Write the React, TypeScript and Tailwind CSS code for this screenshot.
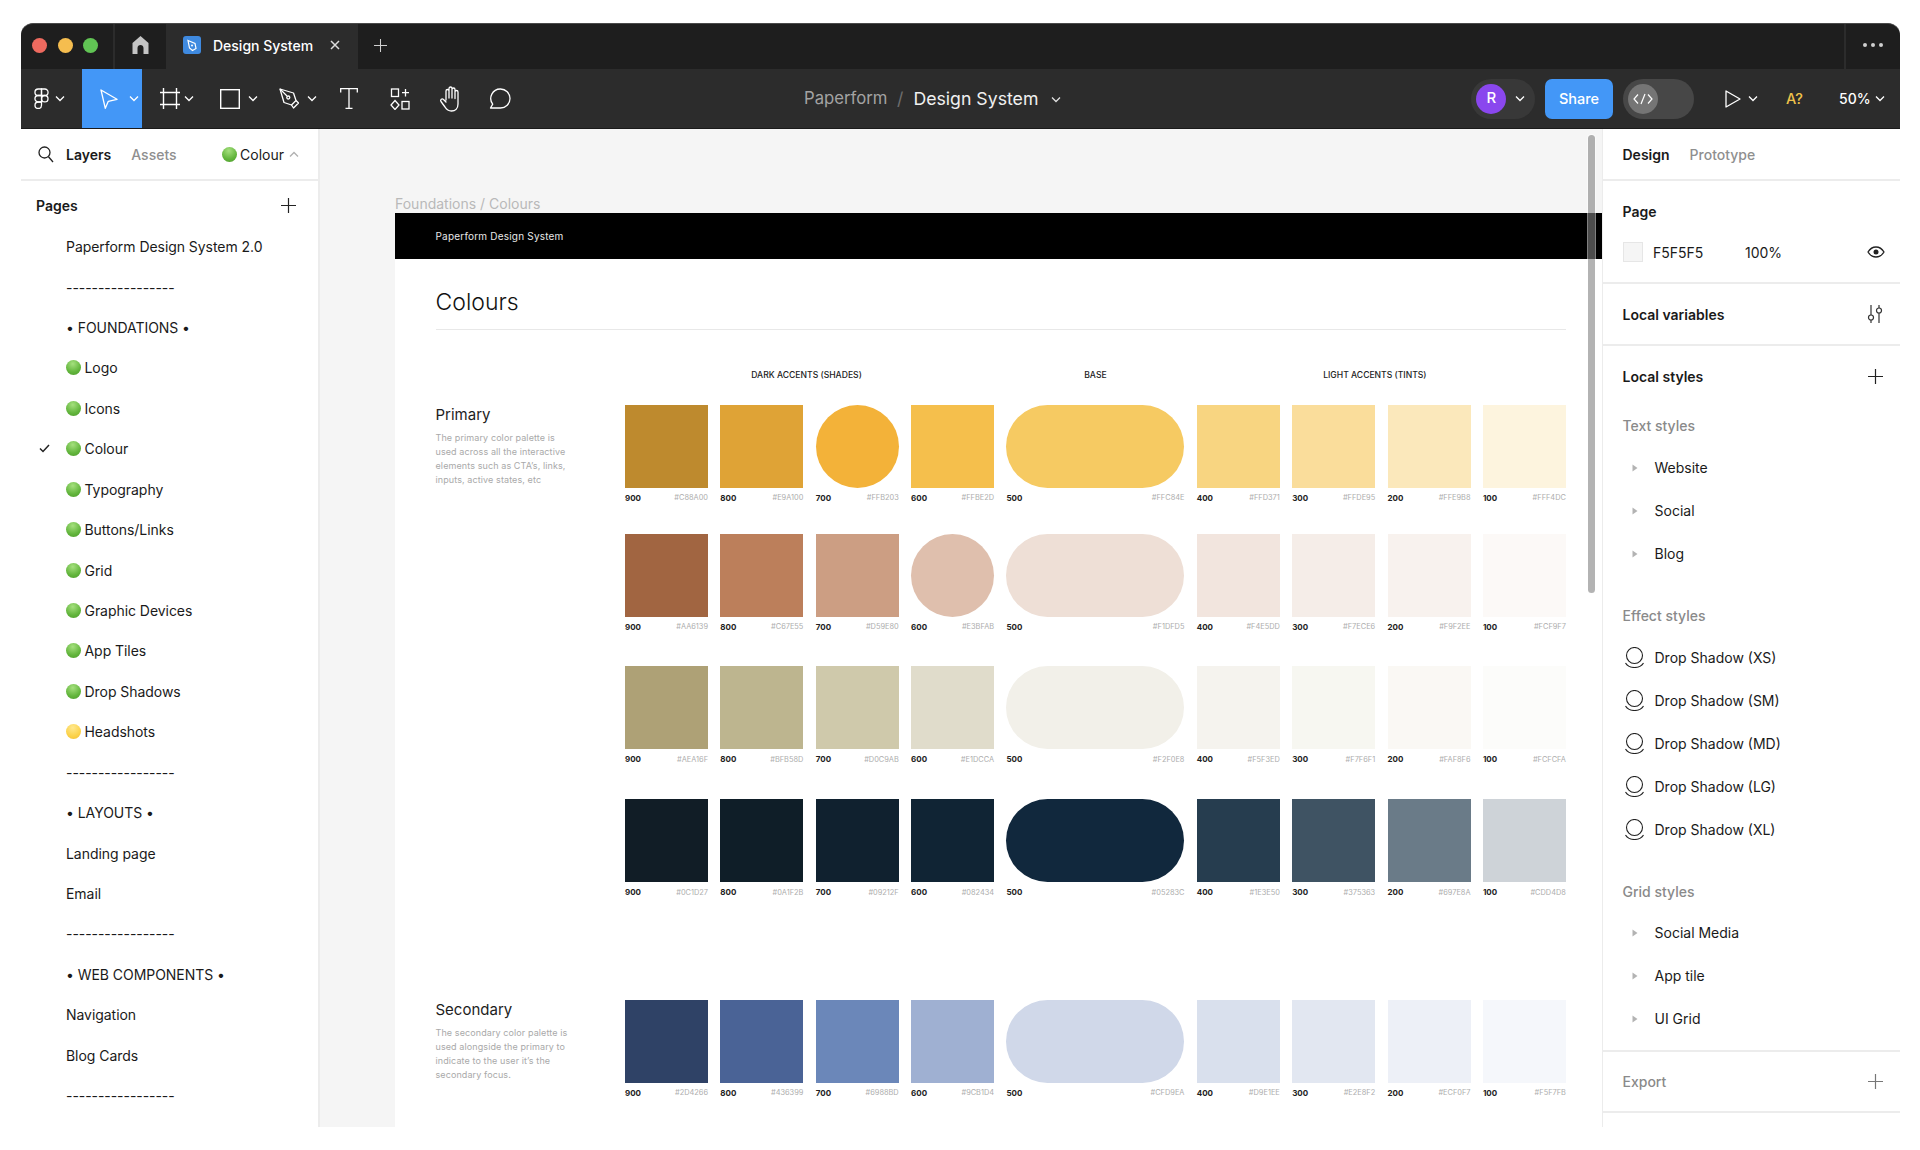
import React from "react";

const Chev = ({ up = false, className = "" }: { up?: boolean; className?: string }) => (
  <svg width="10" height="7" viewBox="0 0 10 7" fill="none" className={className}>
    <path d={up ? "M1 5.5 5 1.5 9 5.5" : "M1 1.5 5 5.5 9 1.5"} stroke="currentColor" strokeWidth="1.3" />
  </svg>
);

const Plus = ({ size = 15, className = "" }: { size?: number; className?: string }) => (
  <svg width={size} height={size} viewBox="0 0 15 15" fill="none" className={className}>
    <path d="M7.5 0v15M0 7.5h15" stroke="currentColor" strokeWidth="1.2" />
  </svg>
);

const Dot = ({ yellow = false, className = "" }: { yellow?: boolean; className?: string }) => (
  <span
    className={
      (yellow
        ? "w-[15px] h-[15px] rounded-full shrink-0 bg-[radial-gradient(circle_at_45%_25%,#ffe88e,#fbd24a_60%,#f2bd33)] "
        : "w-[15px] h-[15px] rounded-full shrink-0 bg-[radial-gradient(circle_at_45%_25%,#a5e07e,#62b53c_60%,#4c9a2c)] ") + className
    }
  />
);

type Page = { t: string; dot?: "g" | "y"; check?: boolean };
const pages: Page[] = [
  { t: "Paperform Design System 2.0" },
  { t: "-----------------" },
  { t: "• FOUNDATIONS •" },
  { t: "Logo", dot: "g" },
  { t: "Icons", dot: "g" },
  { t: "Colour", dot: "g", check: true },
  { t: "Typography", dot: "g" },
  { t: "Buttons/Links", dot: "g" },
  { t: "Grid", dot: "g" },
  { t: "Graphic Devices", dot: "g" },
  { t: "App Tiles", dot: "g" },
  { t: "Drop Shadows", dot: "g" },
  { t: "Headshots", dot: "y" },
  { t: "-----------------" },
  { t: "• LAYOUTS •" },
  { t: "Landing page" },
  { t: "Email" },
  { t: "-----------------" },
  { t: "• WEB COMPONENTS •" },
  { t: "Navigation" },
  { t: "Blog Cards" },
  { t: "-----------------" },
];

type Sw = { n: string; hex: string; c: string };
const mk = (cols: string[], hexes: string[]): Sw[] =>
  ["900", "800", "700", "600", "500", "400", "300", "200", "100"].map((n, i) => ({ n, hex: hexes[i], c: cols[i] }));

const rows = [
  {
    mt: "mt-[23px]",
    circle: 2,
    sw: mk(
      ["#BE8A2E", "#DFA336", "#F3B239", "#F5BF4C", "#F6CA62", "#F8D581", "#FADD9B", "#FBE8BB", "#FDF4DE"],
      ["#C88A00", "#E9A100", "#FFB203", "#FFBE2D", "#FFC84E", "#FFD371", "#FFDE95", "#FFE9B8", "#FFF4DC"]
    ),
    title: "Primary",
    desc: ["The primary color palette is", "used across all the interactive", "elements such as CTA’s, links,", "inputs, active states, etc"],
  },
  {
    mt: "mt-[30px]",
    circle: 3,
    sw: mk(
      ["#A16541", "#BC7F5B", "#CC9E83", "#DFBFAD", "#EEDFD6", "#F2E5DE", "#F5EDE8", "#F8F2EE", "#FCF9F7"],
      ["#AA6139", "#C67E55", "#D59E80", "#E3BFAB", "#F1DFD5", "#F4E5DD", "#F7ECE6", "#F9F2EE", "#FCF9F7"]
    ),
  },
  {
    mt: "mt-[33.7px]",
    circle: -1,
    sw: mk(
      ["#AEA176", "#BDB58F", "#CFC9AB", "#E0DCCB", "#F2F0E9", "#F5F3EE", "#F7F7F1", "#FAF8F4", "#FCFCFA"],
      ["#AEA16F", "#BFB58D", "#D0C9AB", "#E1DCCA", "#F2F0E8", "#F5F3ED", "#F7F6F1", "#FAF8F6", "#FCFCFA"]
    ),
  },
  {
    mt: "mt-[33.6px]",
    circle: -1,
    sw: mk(
      ["#111D26", "#0F1E28", "#10212F", "#102434", "#11283D", "#263D4F", "#3F5363", "#6A7B88", "#CED3D8"],
      ["#0C1D27", "#0A1F2B", "#09212F", "#082434", "#05283C", "#1E3E50", "#375363", "#697E8A", "#CDD4D8"]
    ),
  },
  {
    mt: "mt-[101.7px]",
    circle: -1,
    sw: mk(
      ["#2F4266", "#4A6396", "#6B87B9", "#9FB0D2", "#D0D8E9", "#D9E0ED", "#E2E7F1", "#EDF0F7", "#F5F7FB"],
      ["#2D4266", "#436399", "#6988BD", "#9CB1D4", "#CFD9EA", "#D9E1EE", "#E2E8F2", "#ECF0F7", "#F5F7FB"]
    ),
    title: "Secondary",
    desc: ["The secondary color palette is", "used alongside the primary to", "indicate to the user it’s the", "secondary focus."],
  },
];

const gridCols = "grid grid-cols-[83px_83px_83px_83px_178px_83px_83px_83px_83px] gap-x-[12.36px]";

const Tri = () => (
  <svg width="6" height="8" viewBox="0 0 6 8" className="shrink-0 ml-[29px] mr-[17px]">
    <path d="M0.5 0.5 5.5 4 0.5 7.5z" fill="#b3b3b3" />
  </svg>
);

const StyleRow = ({ t }: { t: string }) => (
  <div className="h-[43px] flex items-center text-[14px] text-[#1a1a1a]">
    <Tri />
    <span>{t}</span>
  </div>
);

const ShadowRow = ({ t }: { t: string }) => (
  <div className="h-[43px] flex items-center text-[14px] text-[#1a1a1a] pl-[22px]">
    <svg width="19" height="21" viewBox="0 0 19 21" fill="none" className="mr-[11px] shrink-0">
      <circle cx="9.5" cy="8.5" r="8" stroke="#222" strokeWidth="1.1" />
      <path d="M0.500 16c1.800 3 5 4.500 9 4.500s7.200-1.500 9-4.500" stroke="#222" strokeWidth="1.1" />
    </svg>
    {t}
  </div>
);

export default function App() {
  return (
    <div className="w-[1920px] h-[1150px] bg-white overflow-hidden font-['Inter',sans-serif] pt-[23px] pl-[21px]">
      <div className="w-[1879px] h-[1104px] flex flex-col">
        {/* Tab bar */}
        <div className="h-[46px] bg-[#1e1e1e] rounded-t-[12px] flex items-stretch text-white shrink-0 border-t border-[#4a4a4a]">
          <div className="w-[94px] flex items-center gap-[10.500px] pl-[11px] pb-[3px] border-r-2 border-[#2c2c2c]">
            <span className="w-[15px] h-[15px] rounded-full bg-[#ee6a5f]" />
            <span className="w-[15px] h-[15px] rounded-full bg-[#f5bd4f]" />
            <span className="w-[15px] h-[15px] rounded-full bg-[#61c454]" />
          </div>
          <div className="w-[51px] flex items-center justify-center pb-[3px]">
            <svg width="17" height="18" viewBox="0 0 17 18">
              <path d="M8.5 0 16.500 7V18H11.500V12C11.500 10.300 10.200 9 8.500 9S5.500 10.300 5.500 12V18H0.500V7z" fill="#c4c4c4" />
            </svg>
          </div>
          <div className="w-[192px] bg-[#2c2c2c] flex items-center pl-[17px] pb-[3px]">
            <span className="w-[18px] h-[18px] rounded-[3px] bg-[#3f8ae0] flex items-center justify-center shrink-0">
              <svg width="12" height="13" viewBox="0 0 12 13" fill="none">
                <path d="M2 1.500 9 4.500 10 9.500 6.500 11.500 3.500 9z" stroke="#fff" strokeWidth="1.200" />
                <circle cx="6" cy="6.500" r="1" fill="#fff" />
              </svg>
            </span>
            <span className="ml-[12px] text-[14px] font-medium whitespace-nowrap">Design System</span>
            <svg width="10" height="10" viewBox="0 0 10 10" className="ml-[17px] shrink-0">
              <path d="M1 1 9 9M9 1 1 9" stroke="#ddd" strokeWidth="1.500" />
            </svg>
          </div>
          <div className="w-[44px] flex items-center justify-center text-[#d0d0d0] pb-[3px]">
            <Plus size={13} />
          </div>
          <div className="flex-1" />
          <div className="w-[56px] border-l-2 border-[#2c2c2c] flex items-center justify-center gap-[4px] pb-[3px]">
            <span className="w-[4px] h-[4px] rounded-full bg-[#cfcfcf]" />
            <span className="w-[4px] h-[4px] rounded-full bg-[#cfcfcf]" />
            <span className="w-[4px] h-[4px] rounded-full bg-[#cfcfcf]" />
          </div>
        </div>

        {/* Toolbar */}
        <div className="h-[60px] bg-[#2c2c2c] flex items-center text-white shrink-0 relative border-b border-[#1a1a1a]">
          <div className="w-[61px] flex items-center pl-[13px] gap-[3px]">
            <svg width="15" height="21" viewBox="0 0 15 21" fill="none" stroke="#fff" strokeWidth="1.300">
              <path d="M7.500 1H4.200a3.200 3.200 0 0 0 0 6.500h3.300z" />
              <path d="M7.500 1h3.300a3.200 3.200 0 0 1 0 6.500H7.500z" />
              <path d="M7.500 7.500H4.200a3.200 3.200 0 0 0 0 6.500h3.300z" />
              <circle cx="10.800" cy="10.700" r="3.200" />
              <path d="M4.200 14h3.300v3.300a3.250 3.250 0 1 1-3.300-3.300z" />
            </svg>
            <Chev className="text-white ml-[3px]" />
          </div>
          <div className="w-[60px] h-full bg-[#4397f7] flex items-center pl-[18px] gap-[11px]">
            <svg width="18" height="20" viewBox="0 0 18 20" fill="none">
              <path d="M1 1 17 10.300 8.300 12.300 5.300 19.300z" stroke="#fff" strokeWidth="1.300" strokeLinejoin="round" />
            </svg>
            <Chev />
          </div>
          <div className="w-[60px] flex items-center pl-[18px] gap-[4px]">
            <svg width="20" height="21" viewBox="0 0 20 21" fill="none" stroke="#fff" strokeWidth="1.400">
              <path d="M3.500 0v21M16.500 0v21M0 4.500h20M0 16.500h20" />
            </svg>
            <Chev />
          </div>
          <div className="w-[60px] flex items-center pl-[18px] gap-[8px]">
            <svg width="20" height="20" viewBox="0 0 20 20" fill="none" stroke="#fff" strokeWidth="1.400">
              <rect x="0.700" y="0.700" width="18.600" height="18.600" />
            </svg>
            <Chev />
          </div>
          <div className="w-[61px] flex items-center pl-[17px] gap-[8px]">
            <svg width="20" height="21" viewBox="0 0 20 21" fill="none" stroke="#fff" strokeWidth="1.300" strokeLinejoin="round">
              <path d="M1 1 14.500 5 17 12.500 12.500 17 5 14.500z" />
              <path d="M1 1 8 8" />
              <circle cx="9.300" cy="9.500" r="1.500" />
              <path d="M12.500 17 14.500 20 19.500 15 17 12.500" />
            </svg>
            <Chev />
          </div>
          <div className="w-[51px] flex justify-center">
            <svg width="18" height="21" viewBox="0 0 18 21" fill="none" stroke="#fff" strokeWidth="1.300">
              <path d="M0.700 4.500V0.700H17.300V4.500M9 0.700V20.300M5.500 20.300H12.500" />
            </svg>
          </div>
          <div className="w-[52px] flex justify-center">
            <svg width="20" height="22" viewBox="0 0 20 22" fill="none" stroke="#fff" strokeWidth="1.300">
              <rect x="1.500" y="1" width="7" height="7.500" />
              <path d="M15.500 1v7.500M12 4.700h7" />
              <path d="M5 12.500 9 17 5 21.500 1 17z" />
              <rect x="12" y="13.500" width="7" height="7.500" />
            </svg>
          </div>
          <div className="w-[48px] flex justify-center">
            <svg width="23" height="26" viewBox="0 0 23 26" fill="none" stroke="#fff" strokeWidth="1.300" strokeLinejoin="round" strokeLinecap="round">
              <path d="M7 14V5a1.500 1.500 0 0 1 3 0v7M10 12V2.500a1.500 1.500 0 0 1 3 0V12M13 12V3.500a1.500 1.500 0 0 1 3 0V12M16 12.500V6a1.500 1.500 0 0 1 3 0v12c0 4.500-2.800 7-6.500 7-3.500 0-5-1.500-6.500-4L2 15.500c-1.200-1.700 1-3.500 2.500-2L7 16" />
            </svg>
          </div>
          <div className="w-[52px] flex justify-center">
            <svg width="22" height="22" viewBox="0 0 22 22" fill="none" stroke="#fff" strokeWidth="1.300" strokeLinejoin="round">
              <path d="M11.500 1a9.500 9.500 0 0 1 0 19H1.500l2.200-3.800A9.500 9.500 0 0 1 11.500 1z" />
            </svg>
          </div>

          {/* Title: overlays the toolbar centre */}
          <div className="absolute left-[783px] top-0 h-full pt-[1px] flex items-center text-[17.700px] whitespace-nowrap">
            <span className="text-[#a3a3a3] w-[82px] text-[16.700px]">Paperform</span>
            <span className="text-[#6e6e6e] ml-[11px]">/</span>
            <span className="text-[#f0f0f0] ml-[10px]">Design System</span>
            <Chev className="ml-[13px] text-[#e0e0e0]" />
          </div>

          <div className="ml-auto flex items-center h-full pr-[15px]">
            <div className="w-[63.700px] h-[40px] rounded-full bg-[#383838] flex items-center pl-[5px]">
              <span className="w-[30px] h-[30px] rounded-full bg-[#8a47ee] flex items-center justify-center text-[15px] font-medium">R</span>
              <Chev className="ml-[9px]" />
            </div>
            <div className="w-[68px] h-[40px] ml-[10px] rounded-[7px] bg-[#4397f7] flex items-center justify-center text-[14.500px] font-medium">Share</div>
            <div className="w-[70.700px] h-[40px] ml-[10.300px] rounded-full bg-[#474747] flex items-center pl-[5px]">
              <span className="w-[30px] h-[30px] rounded-full bg-[#757575] flex items-center justify-center">
                <svg width="20" height="12" viewBox="0 0 20 12" fill="none" stroke="#fff" strokeWidth="1.200">
                  <path d="M5 1.500 1 6 5 10.500M15 1.500 19 6 15 10.500M12 1 8 11" />
                </svg>
              </span>
            </div>
            <svg width="16" height="18" viewBox="0 0 16 18" fill="none" stroke="#fff" strokeWidth="1.300" className="ml-[31px]">
              <path d="M1 1 15 9 1 17z" strokeLinejoin="round" />
            </svg>
            <Chev className="ml-[7px]" />
            <span className="ml-[28px] w-[17px] text-[14.500px] font-medium text-[#eec24a] whitespace-nowrap">A?</span>
            <span className="ml-[36px] w-[30px] text-[14px] font-medium whitespace-nowrap">50%</span>
            <Chev className="ml-[6px]" />
          </div>
        </div>

        {/* Body */}
        <div className="flex-1 flex min-h-0">
          {/* Left panel */}
          <div className="w-[299px] shrink-0 border-r-2 border-[#ececec] bg-white overflow-hidden text-[14px] text-[#1a1a1a]">
            <div className="h-[52px] border-b-2 border-[#ececec] flex items-center pl-[17px] pr-[19px] text-[14px]">
              <svg width="16" height="17" viewBox="0 0 16 17" fill="none" stroke="#222" strokeWidth="1.300" className="mr-[12px]">
                <circle cx="6.500" cy="6.500" r="5.500" />
                <path d="M10.500 10.800 15 16" />
              </svg>
              <span className="font-semibold">Layers</span>
              <span className="ml-[20px] text-[#8f8f8f] font-medium">Assets</span>
              <Dot className="ml-auto" />
              <span className="ml-[3px] font-normal">Colour</span>
              <Chev up className="ml-[5px] text-[#b0b0b0]" />
            </div>
            <div className="h-[45.500px] pt-[4px] pl-[15px] pr-[22px] flex items-center justify-between">
              <span className="font-semibold">Pages</span>
              <Plus className="text-[#222]" />
            </div>
            {pages.map((p, i) => (
              <div key={i} className="h-[40.430px] flex items-center pl-[45px] relative whitespace-nowrap tracking-[-0.05px]">
                {p.check && (
                  <svg width="11" height="9" viewBox="0 0 11 9" fill="none" className="absolute left-[18px]">
                    <path d="M1 4.500 4 7.500 10 1" stroke="#222" strokeWidth="1.500" />
                  </svg>
                )}
                {p.dot && <Dot yellow={p.dot === "y"} className="mr-[3.500px]" />}
                {p.t}
              </div>
            ))}
          </div>

          {/* Canvas */}
          <div className="flex-1 min-w-0 bg-[#f5f5f5] relative overflow-hidden pt-[65.500px]">
            <div className="ml-[75px] h-[18.500px] leading-[18px] text-[14px] text-[#b9b9b9]">Foundations / Colours</div>
            <div className="ml-[75px] h-[45.500px] bg-black flex items-center pl-[40.500px] pt-[2px] text-[10px] tracking-[0.2px] text-[#e8e8e8]">
              Paperform Design System
            </div>
            <div className="ml-[75px] bg-white h-[900px] pl-[40.500px] pr-[35.500px] pt-[28.300px]">
              <div className="h-[30px] leading-[30px] text-[23px] font-light text-[#111]">Colours</div>
              <div className="h-[1px] bg-[#e8e8e8] mt-[12px]" />
              <div className="mt-[38px] flex pl-[189.500px] text-[8.600px] font-medium text-[#222] h-[14px] leading-[14px]">
                <div className={gridCols + " w-full"}>
                  <div className="col-span-4 flex justify-center pr-[6px]">DARK ACCENTS (SHADES)</div>
                  <div className="flex justify-center">BASE</div>
                  <div className="col-span-4 flex justify-center pr-[13px]">LIGHT ACCENTS (TINTS)</div>
                </div>
              </div>
              {rows.map((r, i) => (
                <div key={i} className={"flex " + r.mt}>
                  <div className="w-[189.500px] shrink-0">
                    {r.title && (
                      <>
                        <div className="h-[20px] leading-[20px] text-[15px] text-[#1d1d1d]">{r.title}</div>
                        <div className="mt-[6px] text-[9px] leading-[14px] text-[#a9a9a9] tracking-[0.1px] whitespace-nowrap">
                          {r.desc!.map((l) => (
                            <div key={l}>{l}</div>
                          ))}
                        </div>
                      </>
                    )}
                  </div>
                  <div className={gridCols}>
                    {r.sw.map((s, j) => (
                      <div key={j}>
                        <div
                          className={
                            "h-[83px] " + (j === 4 ? "rounded-[42px]" : j === r.circle ? "rounded-full" : "")
                          }
                          style={{ backgroundColor: s.c }}
                        />
                        <div className="mt-[4px] h-[12px] flex items-center justify-between whitespace-nowrap">
                          <span className="font-bold text-[#222] text-[8px]">{s.n}</span>
                          <span className="text-[#adadad] text-[7.400px]">{s.hex}</span>
                        </div>
                      </div>
                    ))}
                  </div>
                </div>
              ))}
            </div>
            {/* scrollbar overlay */}
            <div className="absolute left-[1267.700px] top-[6px] w-[7px] h-[458px] rounded-full bg-[#808080]/60 ring-1 ring-white/50" />
          </div>

          {/* Right panel */}
          <div className="w-[298.500px] shrink-0 border-l-[1.500px] border-[#ececec] bg-white overflow-hidden text-[14px] text-[#1a1a1a]">
            <div className="h-[52px] border-b-2 border-[#ececec] flex items-center pl-[20px]">
              <span className="font-semibold">Design</span>
              <span className="ml-[20px] text-[#8f8f8f] font-medium">Prototype</span>
            </div>
            <div className="h-[103px] border-b-2 border-[#ececec] pl-[20px] pr-[15px] pt-[21px]">
              <div className="h-[20px] leading-[20px] font-semibold">Page</div>
              <div className="mt-[20px] h-[20px] flex items-center">
                <span className="w-[20px] h-[20px] bg-[#f5f5f5] border border-[#e6e6e6] shrink-0" />
                <span className="ml-[10.500px] w-[92px]">F5F5F5</span>
                <span>100%</span>
                <svg width="18" height="12" viewBox="0 0 18 12" fill="none" className="ml-auto">
                  <path d="M1 6c2-3.300 4.800-5 8-5s6 1.700 8 5c-2 3.300-4.800 5-8 5S3 9.300 1 6z" stroke="#222" strokeWidth="1.300" />
                  <circle cx="9" cy="6" r="2.500" fill="#222" />
                </svg>
              </div>
            </div>
            <div className="h-[62px] border-b-2 border-[#ececec] pl-[20px] pr-[16px] flex items-center justify-between">
              <span className="font-semibold">Local variables</span>
              <svg width="18" height="20" viewBox="0 0 18 20" fill="none" stroke="#333" strokeWidth="1.200">
                <path d="M5 1v10M5 16v3M13 1v3M13 9v10" />
                <circle cx="5" cy="13.500" r="2.500" />
                <circle cx="13" cy="6.500" r="2.500" />
              </svg>
            </div>
            <div className="h-[60px] pl-[20px] pr-[17px] flex items-center justify-between">
              <span className="font-semibold">Local styles</span>
              <Plus className="text-[#222]" />
            </div>
            <div className="h-[38px] mb-[2px] pl-[20px] flex items-center font-medium text-[#8a8a8a]">Text styles</div>
            <StyleRow t="Website" />
            <StyleRow t="Social" />
            <StyleRow t="Blog" />
            <div className="h-[38px] mt-[21px] mb-[2px] pl-[20px] flex items-center font-medium text-[#8a8a8a]">Effect styles</div>
            <ShadowRow t="Drop Shadow (XS)" />
            <ShadowRow t="Drop Shadow (SM)" />
            <ShadowRow t="Drop Shadow (MD)" />
            <ShadowRow t="Drop Shadow (LG)" />
            <ShadowRow t="Drop Shadow (XL)" />
            <div className="h-[38px] mt-[21px] mb-[1px] pl-[20px] flex items-center font-medium text-[#8a8a8a]">Grid styles</div>
            <StyleRow t="Social Media" />
            <StyleRow t="App tile" />
            <StyleRow t="UI Grid" />
            <div className="h-[63px] mt-[10px] border-y-2 border-[#ececec] pl-[20px] pr-[17px] flex items-center justify-between">
              <span className="font-medium text-[#8a8a8a]">Export</span>
              <Plus className="text-[#777]" />
            </div>
          </div>
        </div>
      </div>
    </div>
  );
}
